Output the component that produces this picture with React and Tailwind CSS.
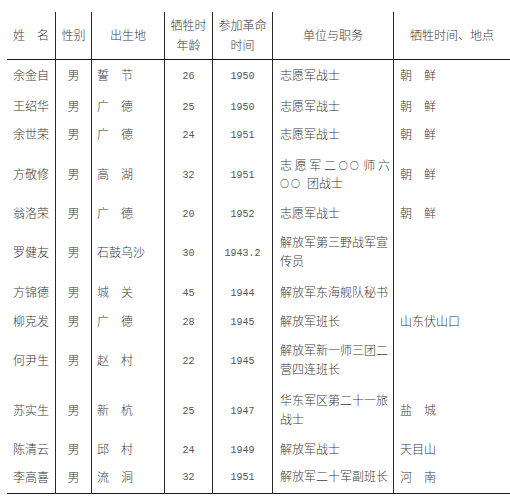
import React from "react";

const cjk = { fontFamily: '"Liberation Serif", "Noto Sans CJK SC", serif' };
const mono = { fontFamily: '"Liberation Mono", "DejaVu Sans Mono", monospace' };

const rows = [
  { h: "h-[32px]", name: "余金自", place: "誓　节", age: "26", year: "1950", unit: ["志愿军战士"], where: "朝　鲜" },
  { h: "h-[30px]", name: "王绍华", place: "广　德", age: "25", year: "1950", unit: ["志愿军战士"], where: "朝　鲜" },
  { h: "h-[26px]", name: "余世荣", place: "广　德", age: "24", year: "1951", unit: ["志愿军战士"], where: "朝　鲜" },
  { h: "h-[54px]", name: "方敬修", place: "高　湖", age: "32", year: "1951", unit: "special", where: "朝　鲜" },
  { h: "h-[24px]", name: "翁洛荣", place: "广　德", age: "20", year: "1952", unit: ["志愿军战士"], where: "朝　鲜" },
  { h: "h-[54px]", name: "罗健友", place: "石鼓乌沙", age: "30", year: "1943.2", unit: ["解放军第三野战军宣", "传员"], where: "" },
  { h: "h-[26px]", name: "方锦德", place: "城　关", age: "45", year: "1944", unit: ["解放军东海舰队秘书"], where: "" },
  { h: "h-[32px]", name: "柳克发", place: "广　德", age: "28", year: "1945", unit: ["解放军班长"], where: "山东伏山口" },
  { h: "h-[46px]", name: "何尹生", place: "赵　村", age: "22", year: "1945", unit: ["解放军新一师三团二", "营四连班长"], where: "" },
  { h: "h-[54px]", name: "苏实生", place: "新　杭", age: "25", year: "1947", unit: ["华东军区第二十一旅", "战士"], where: "盐　城" },
  { h: "h-[24px]", name: "陈清云", place: "邱　村", age: "24", year: "1949", unit: ["解放军战士"], where: "天目山" },
  { h: "h-[32px]", name: "李高喜", place: "流　洞", age: "32", year: "1951", unit: ["解放军二十军副班长"], where: "河　南" },
];

const grid = "grid grid-cols-[48px_36px_73px_48px_60px_121px_117px]";
const vl = "border-l border-[#2a2a2a]";

function Unit({ unit }) {
  if (unit === "special") {
    return (
      <div className="w-[110px] leading-[18px]">
        <div className="flex justify-between items-center">
          <span>志</span><span>愿</span><span>军</span><span>二</span>
          <span className="text-[9px] tracking-[2px]">〇〇</span>
          <span>师</span><span>六</span>
        </div>
        <div className="flex items-center">
          <span className="text-[9px] tracking-[2px]">〇〇</span>
          <span className="ml-[5px]">团战士</span>
        </div>
      </div>
    );
  }
  return (
    <div className="leading-[19px]">
      {unit.map((l, i) => (
        <div key={i}>{l}</div>
      ))}
    </div>
  );
}

export default function App() {
  return (
    <div className="w-[510px] h-[500px] bg-white text-[#3a3a3a] text-[12px] font-light" style={cjk}>
      <div className="pt-[12px] pl-[7px]">
        <div className="w-[503px]">
          <div className={`${grid} h-[48px] border-b border-[#1a1a1a]`}>
            <div className="flex items-center justify-center">姓　名</div>
            <div className={`${vl} flex items-center justify-center`}>性别</div>
            <div className={`${vl} flex items-center justify-center`}>出生地</div>
            <div className={`${vl} flex flex-col items-center justify-center leading-[20px]`}>
              <div>牺牲时</div>
              <div>年龄</div>
            </div>
            <div className={`${vl} flex flex-col items-center justify-center leading-[20px]`}>
              <div>参加革命</div>
              <div>时间</div>
            </div>
            <div className={`${vl} flex items-center justify-center`}>单位与职务</div>
            <div className={`${vl} flex items-center justify-center`}>牺牲时间、地点</div>
          </div>
          {rows.map((r, i) => (
            <div
              key={i}
              className={`${grid} ${r.h} ${i === rows.length - 1 ? "border-b border-[#1a1a1a]" : ""}`}
            >
              <div className="flex items-center justify-center">{r.name}</div>
              <div className={`${vl} flex items-center justify-center`}>男</div>
              <div className={`${vl} flex items-center pl-[5px]`}>{r.place}</div>
              <div className={`${vl} flex items-center justify-center text-[10px] text-[#555]`} style={mono}>
                {r.age}
              </div>
              <div className={`${vl} flex items-center justify-center text-[10px] text-[#555]`} style={mono}>
                {r.year}
              </div>
              <div className={`${vl} flex items-center pl-[7px]`}>
                <Unit unit={r.unit} />
              </div>
              <div className={`${vl} flex items-center pl-[6px]`}>{r.where}</div>
            </div>
          ))}
        </div>
      </div>
    </div>
  );
}
